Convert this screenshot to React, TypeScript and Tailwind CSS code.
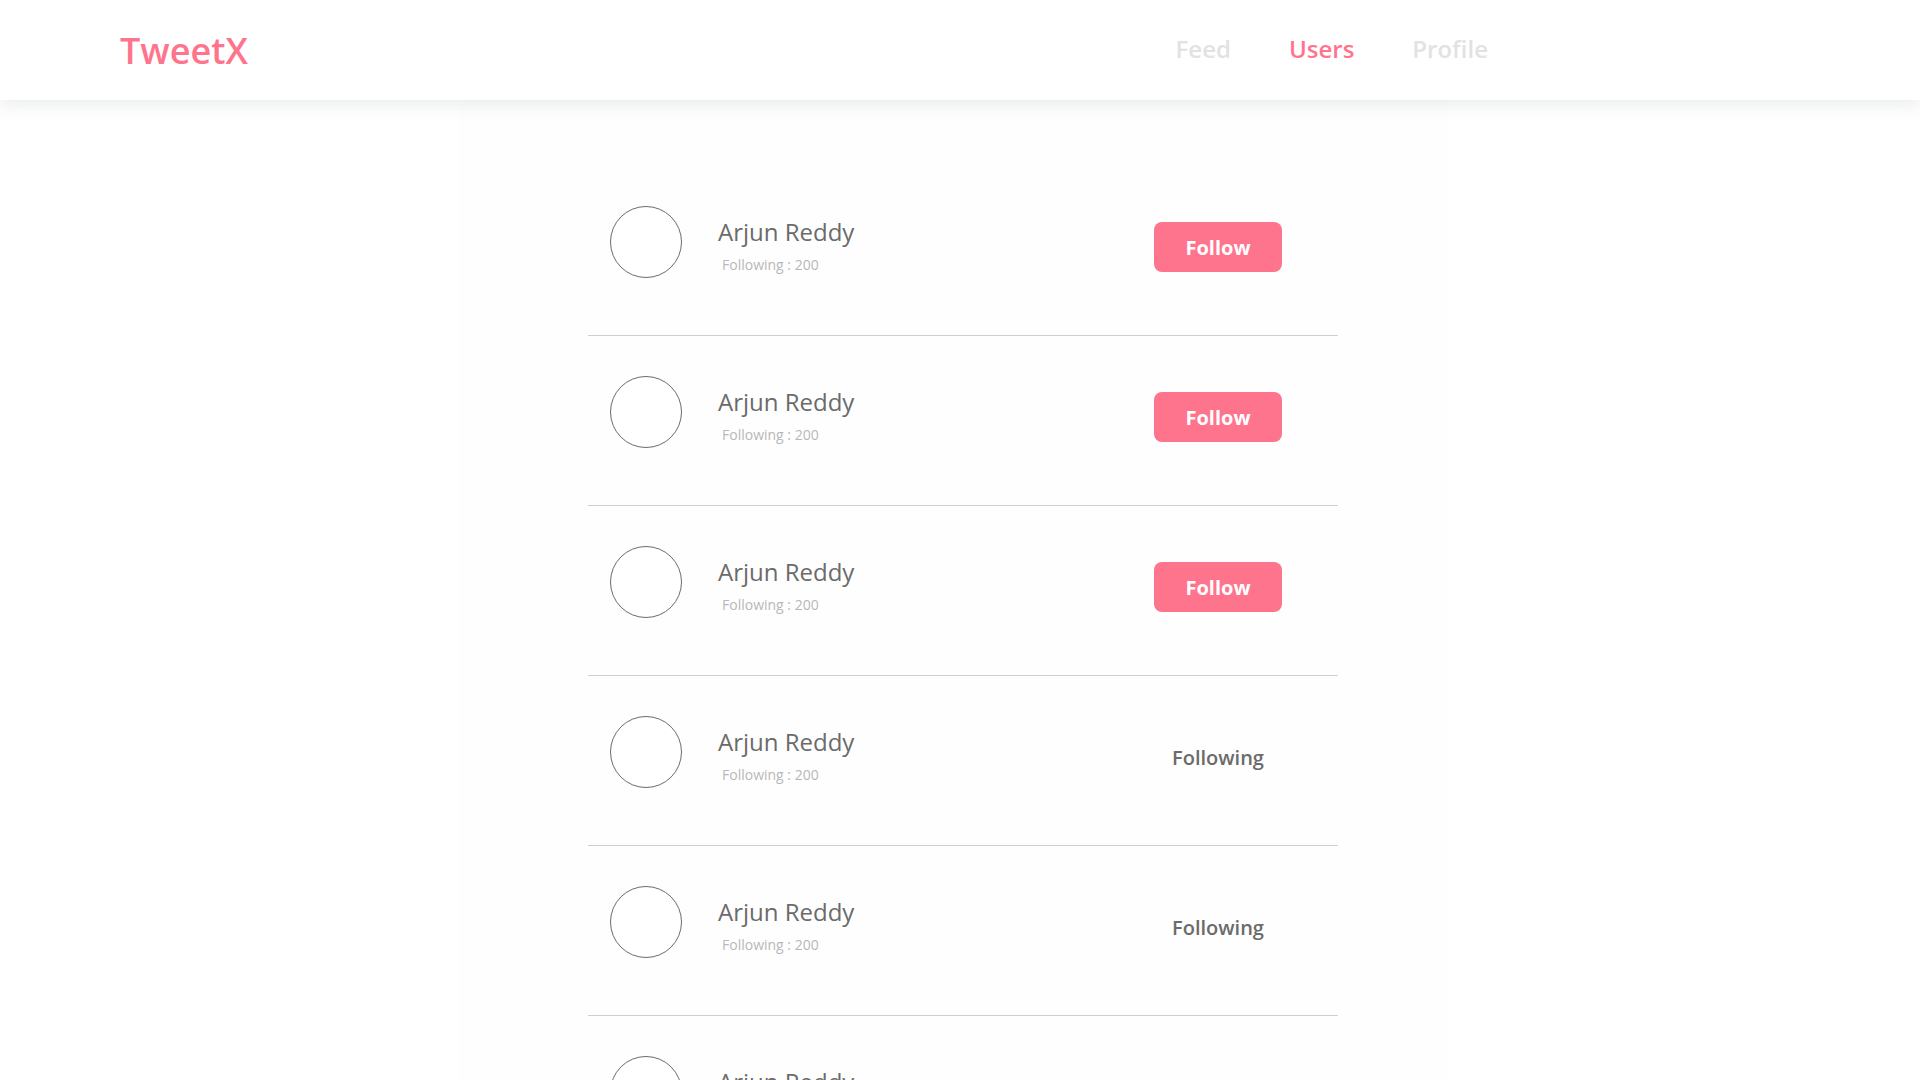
type User = { id: number; name: string; following: number; followed: boolean };

const users: User[] = [
  { id: 1, name: "Arjun Reddy", following: 200, followed: false },
  { id: 2, name: "Arjun Reddy", following: 200, followed: false },
  { id: 3, name: "Arjun Reddy", following: 200, followed: false },
  { id: 4, name: "Arjun Reddy", following: 200, followed: true },
  { id: 5, name: "Arjun Reddy", following: 200, followed: true },
  { id: 6, name: "Arjun Reddy", following: 200, followed: true },
];

function Header() {
  return (
    <header className="z-10 flex h-[100px] shrink-0 items-center justify-between bg-white pr-[22.5%] pl-[120px] shadow-[0_4px_18px_rgba(65,80,100,0.12)]">
      <a href="#home" className="pt-0.5 text-4xl font-semibold text-[#ff748d]">
        TweetX
      </a>
      <nav className="flex items-center gap-[58px] pb-0.5 text-2xl font-semibold text-[#e2e2e2]">
        <a href="#feed">Feed</a>
        <a href="#users" aria-current="page" className="text-[#ff748d]">
          Users
        </a>
        <a href="#profile">Profile</a>
      </nav>
    </header>
  );
}

function UserRow({ user }: { user: User }) {
  return (
    <li className="flex h-[170px] items-start border-b border-[#d0d0d0] pt-10 pr-14 pl-[22px]">
      <div className="size-[72px] shrink-0 rounded-full border border-[#6b6b6b] bg-white" />
      <div className="ml-9 pt-2.5">
        <h2 className="text-2xl leading-8 font-medium text-[#6b6b6b]">{user.name}</h2>
        <p className="pt-px pl-1 text-sm leading-8 text-[#b8b8b8]">Following : {user.following}</p>
      </div>
      {user.followed ? (
        <button type="button" className="mt-4 ml-auto h-[50px] w-32 pt-0.5 text-xl font-semibold text-[#6b6b6b]">
          Following
        </button>
      ) : (
        <button type="button" className="mt-4 ml-auto h-[50px] w-32 rounded-lg bg-[#ff748d] pt-0.5 text-xl font-bold text-white">
          Follow
        </button>
      )}
    </li>
  );
}

export default function App() {
  return (
    <div className="flex h-screen flex-col overflow-hidden bg-white font-['Open_Sans',sans-serif]">
      <Header />
      <main className="min-h-0 flex-1 overflow-y-auto pr-3 [scrollbar-width:none]">
        <div className="mx-auto max-w-[990px] bg-[#fefefe] pt-[66px] pl-[18px]">
          <ul className="mx-auto max-w-[750px]">
            {users.map((user) => (
              <UserRow key={user.id} user={user} />
            ))}
          </ul>
        </div>
      </main>
    </div>
  );
}
